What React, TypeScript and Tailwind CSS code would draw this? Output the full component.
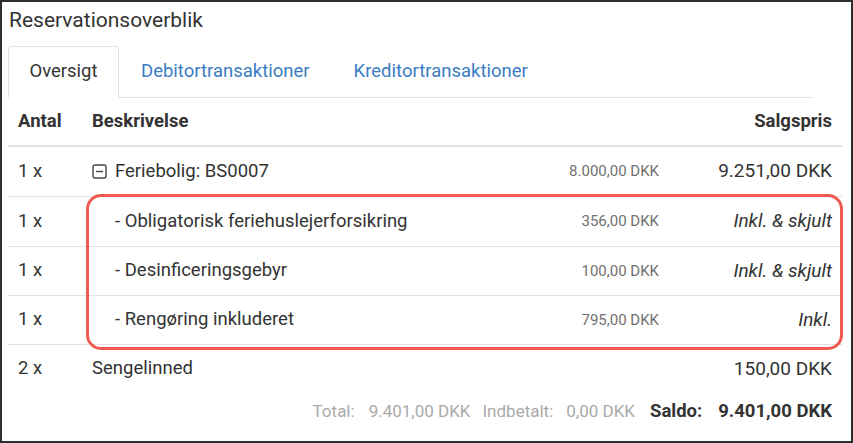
import React from "react";

const Minus = () => (
  <svg width="15" height="15" viewBox="0 0 15 15" className="mr-[8px] shrink-0">
    <rect x="1" y="1" width="13" height="13" rx="2" fill="none" stroke="#444" strokeWidth="1.4" />
    <line x1="4" y1="7.5" x2="11" y2="7.5" stroke="#444" strokeWidth="1.4" />
  </svg>
);

type Row = { q: string; d: React.ReactNode; p?: string; s: string; italic?: boolean; h: string; border?: boolean };

export default function App() {
  const rows: Row[] = [
    { q: "1 x", d: (<span className="flex items-center"><Minus />Feriebolig: BS0007</span>), p: "8.000,00 DKK", s: "9.251,00 DKK", h: "h-[50px]", border: true },
    { q: "1 x", d: <span className="pl-[23px]">- Obligatorisk feriehuslejerforsikring</span>, p: "356,00 DKK", s: "Inkl. & skjult", italic: true, h: "h-[50px]", border: true },
    { q: "1 x", d: <span className="pl-[23px]">- Desinficeringsgebyr</span>, p: "100,00 DKK", s: "Inkl. & skjult", italic: true, h: "h-[49px]", border: true },
    { q: "1 x", d: <span className="pl-[23px]">- Rengøring inkluderet</span>, p: "795,00 DKK", s: "Inkl.", italic: true, h: "h-[49px]", border: true },
    { q: "2 x", d: <span>Sengelinned</span>, s: "150,00 DKK", h: "h-[48px]" },
  ];
  return (
    <div className="w-[853px] h-[443px] border-2 border-[#2e2e2e] bg-white text-[#333] font-['Roboto',sans-serif] overflow-hidden">
      <div className="h-[44px] pt-[6px] pl-[7px] text-[21px] leading-[24px]">Reservationsoverblik</div>
      <div className="ml-[6px] w-[805px] h-[52px] flex border-b border-[#e3e3e3] text-[18.5px]">
        <div className="w-[111px] h-[52px] border border-[#e3e3e3] border-b-white rounded-t-[4px] bg-white flex items-center justify-center">Oversigt</div>
        <div className="px-[22px] flex items-center text-[#3a7dc2]">Debitortransaktioner</div>
        <div className="px-[22px] flex items-center text-[#3a7dc2]">Kreditortransaktioner</div>
      </div>
      <div className="relative ml-[6px] w-[834px]">
        <div className="h-[49px] grid grid-cols-[74px_1fr_173px] items-center border-b-2 border-[#e3e3e3] pl-[10px] pr-[10px] font-bold text-[18.5px]">
          <div>Antal</div>
          <div>Beskrivelse</div>
          <div className="text-right">Salgspris</div>
        </div>
        {rows.map((r, i) => (
          <div key={i} className={`${r.h} grid grid-cols-[74px_1fr_auto_173px] items-center pl-[10px] pr-[10px] text-[18.5px] ${r.border ? "border-b border-[#e3e3e3]" : ""}`}>
            <div>{r.q}</div>
            <div>{r.d}</div>
            <div className="text-right text-[15px] text-[#707070]">{r.p ?? ""}</div>
            <div className={`text-right text-[19px] ${r.italic ? "italic" : ""}`}>{r.s}</div>
          </div>
        ))}
        <div className="h-[38px] flex items-center justify-end pr-[10px] text-[17px]">
          <span className="text-[#aaa]">Total:</span>
          <span className="ml-[14px] text-[#aaa]">9.401,00 DKK</span>
          <span className="ml-[12px] text-[#aaa]">Indbetalt:</span>
          <span className="ml-[13px] text-[#aaa]">0,00 DKK</span>
          <span className="ml-[15px] font-bold text-[18.5px]">Saldo:</span>
          <span className="ml-[16px] font-bold text-[18.5px]">9.401,00 DKK</span>
        </div>
        <div className="absolute left-[78px] top-[96px] w-[757px] h-[156px] border-[3px] border-[#ef5a4f] rounded-[15px] pointer-events-none" />
      </div>
    </div>
  );
}
